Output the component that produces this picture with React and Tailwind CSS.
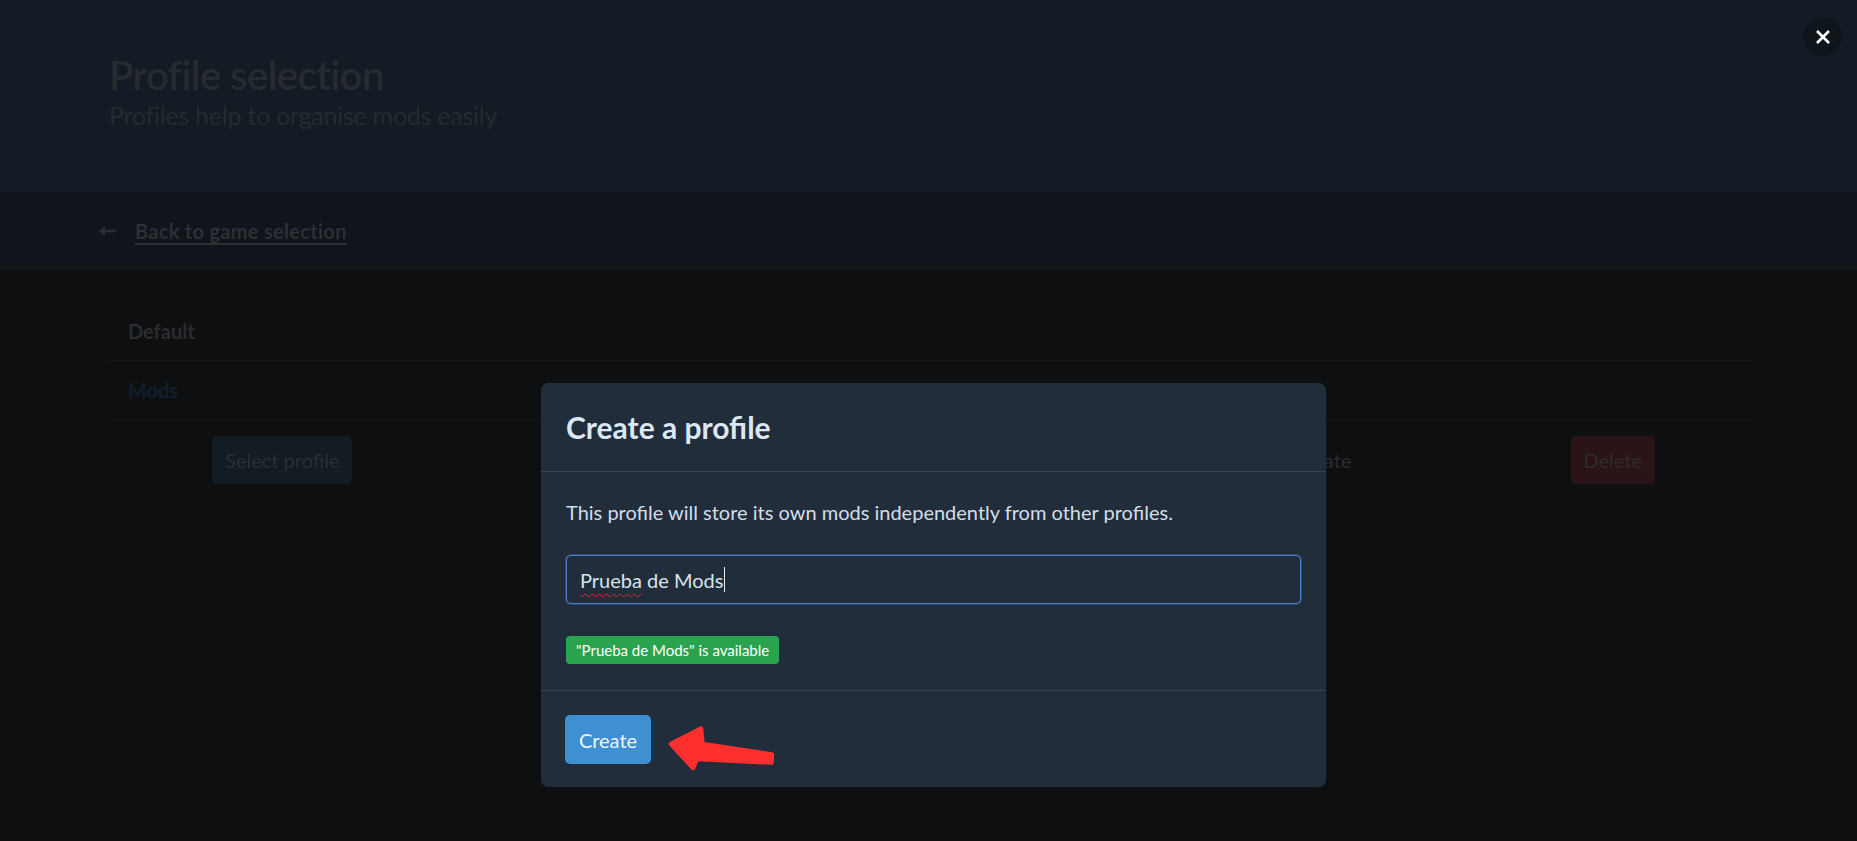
import React from "react";

export default function App() {
  const font = { fontFamily: "Lato, 'Open Sans', sans-serif" };
  return (
    <div className="relative w-[1857px] h-[841px] overflow-hidden bg-[#0e0f11]" style={font}>
      {/* Header */}
      <header className="h-[192px] bg-[#131c24] pl-[109px] pt-[55px]">
        <h1 className="text-[40px] leading-[40px] font-semibold tracking-[-0.55px] text-[#272b2f]">Profile selection</h1>
        <p className="mt-[8px] text-[25px] leading-[25px] tracking-[-0.25px] text-[#252a2e]">Profiles help to organise mods easily</p>
      </header>

      {/* Nav */}
      <nav className="h-[78px] bg-[#11141b] flex items-center pl-[98px]">
        <svg width="18" height="12" viewBox="0 0 18 12" className="mr-[19px]">
          <path d="M2 6 H17.5" stroke="#2b2e32" strokeWidth="2.8" fill="none" />
          <path d="M0.5 6 L7 1 L7 11 Z" fill="#2b2e32" />
        </svg>
        <a className="text-[20px] font-bold tracking-[0.3px] text-[#2d2f33] underline underline-offset-[4px]">Back to game selection</a>
      </nav>

      {/* Content */}
      <main className="pt-[31px] pl-[108px]">
        <div className="w-[1645px]">
          <div className="h-[60px] flex items-center pl-[20px] border-b border-[#17181b]">
            <span className="text-[20px] font-bold text-[#2b2c2f]">Default</span>
          </div>
          <div className="h-[59px] flex items-center pl-[20px] border-b border-[#17181b]">
            <span className="text-[20px] font-bold text-[#0f1f2d]">Mods</span>
          </div>
        </div>
        <div className="mt-[16px] ml-[8px] w-[1663px] grid grid-cols-5 justify-items-center">
          <button className="h-[48px] w-[140px] rounded-[5px] bg-[#131b23] text-[20px] text-[#2a2f33]">Select profile</button>
          <button className="h-[48px] px-[20px] text-[20px] text-[#2a2d30]">Rename</button>
          <button className="h-[48px] px-[20px] text-[20px] text-[#2a2d30]">Create new</button>
          <button className="h-[48px] px-[20px] text-[20px] text-[#2a2d30]">Import / Update</button>
          <button className="h-[48px] w-[84px] rounded-[5px] bg-[#2a1417] text-[20px] text-[#2e2b2c]">Delete</button>
        </div>
      </main>

      {/* Close button */}
      <button className="absolute right-[15px] top-[17px] w-[39px] h-[39px] rounded-full bg-[#0e151b] flex items-center justify-center">
        <svg width="16" height="16" viewBox="0 0 16 16">
          <path d="M2 2 L14 14 M14 2 L2 14" stroke="#ffffff" strokeWidth="2.6" />
        </svg>
      </button>

      {/* Modal */}
      <div className="absolute left-[541px] top-[383px] w-[785px] rounded-[7px] bg-[#212d3b]">
        <div className="h-[89px] flex items-center px-[25px] border-b border-[#36424f]">
          <h2 className="text-[30px] leading-[30px] font-bold text-[#dce7f4]">Create a profile</h2>
        </div>
        <div className="px-[25px] pt-[25px] pb-[26px]">
          <p className="text-[20px] leading-[30px] text-[#d3dde8]">This profile will store its own mods independently from other profiles.</p>
          <div className="mt-[28px] h-[49px] rounded-[5px] border border-[#4c80d6] shadow-[0_0_0_1px_rgba(76,128,214,0.35)] flex items-center px-[13px] bg-[#212d3b]">
            <span className="text-[20px] text-[#d8e3ee]">
              <span className="underline decoration-wavy decoration-[#d42a2a] decoration-1 underline-offset-[5px]">Prueba</span> de Mods
            </span>
            <span className="ml-[1px] w-[1px] h-[25px] bg-[#e6edf5]" />
          </div>
          <div className="mt-[32px]">
            <span className="inline-flex items-center h-[28px] px-[10px] rounded-[4px] bg-[#2aa34f] text-[15px] text-white">"Prueba de Mods" is available</span>
          </div>
        </div>
        <div className="border-t border-[#36424f] px-[24px] pt-[24px] pb-[23px]">
          <button className="h-[49px] w-[86px] rounded-[5px] bg-[#3f8fd3] text-[20px] text-[#eef4fa]">Create</button>
        </div>
      </div>

      {/* Red arrow annotation */}
      <svg className="absolute left-[660px] top-[720px]" width="125" height="60" viewBox="0 0 125 60">
        <polygon
          points="11,24 41,8.5 42.5,24 112,34.5 111.5,42.5 37,39 33,48"
          fill="#fe2f2f"
          stroke="#fe2f2f"
          strokeWidth="4.5"
          strokeLinejoin="round"
        />
      </svg>
    </div>
  );
}
